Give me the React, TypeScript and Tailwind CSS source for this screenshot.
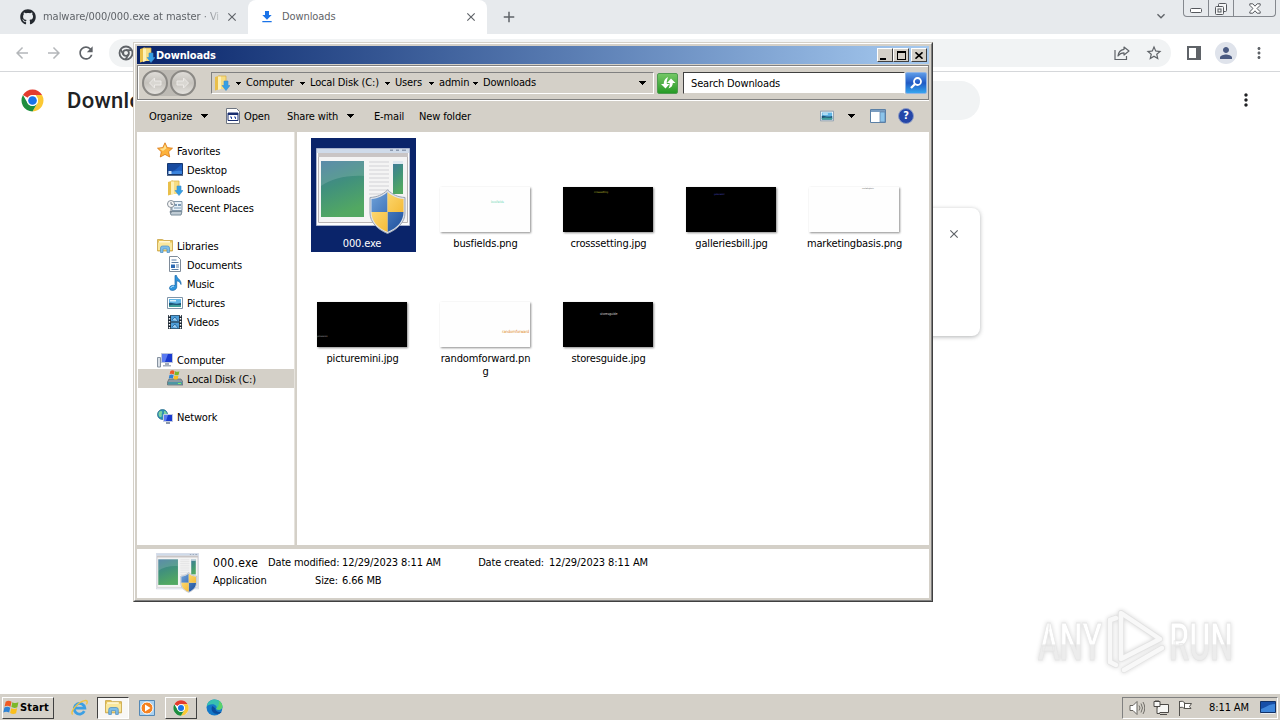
import type { ReactNode } from "react";
import clsx from "clsx";
import { FaGithub } from "react-icons/fa";
import {
  MdAdd,
  MdArrowBack,
  MdArrowForward,
  MdClose,
  MdFileDownload,
  MdKeyboardArrowDown,
  MdMoreVert,
  MdPerson,
  MdRefresh,
  MdStarBorder,
} from "react-icons/md";

type IconProps = { className?: string };

const tahoma = "font-['DejaVu_Sans_Condensed','DejaVu_Sans',sans-serif] [font-stretch:condensed]";

function Caret({ className }: IconProps) {
  return (
    <svg viewBox="0 0 8 4" className={clsx("shrink-0", className)} shapeRendering="crispEdges">
      <path d="M0 0h8L4 4z" />
    </svg>
  );
}

function ChromeLogo({ className }: IconProps) {
  return (
    <svg viewBox="0 0 48 48" className={className}>
      <circle cx="24" cy="24" r="23" fill="#fff" />
      <path d="M4.1 12.5A23 23 0 0 1 43.9 12.5H24a11.5 11.5 0 0 0-10 5.8z" fill="#e33b2e" />
      <path d="M43.9 12.5A23 23 0 0 1 24 47l10-17.3a11.5 11.5 0 0 0 0-11.4L30.5 12.5z" fill="#fcc934" />
      <path d="M4.1 12.5A23 23 0 0 0 24 47l10-17.3a11.5 11.5 0 0 1-20 0z" fill="#1e8e3e" />
      <circle cx="24" cy="24" r="11.5" fill="#fff" />
      <circle cx="24" cy="24" r="9" fill="#1a73e8" />
    </svg>
  );
}

function ChromeMono({ className }: IconProps) {
  return (
    <svg viewBox="0 0 16 16" className={className} fill="none" stroke="#5f6368" strokeWidth="1.8">
      <circle cx="8" cy="8" r="6.5" />
      <circle cx="8" cy="8" r="2.9" />
      <path d="M8 5.1h6M5.5 9.5l-3-5M10.5 9.5l-3 5" />
    </svg>
  );
}

function FolderDownIcon({ className }: IconProps) {
  return (
    <svg viewBox="0 0 16 16" className={className}>
      <path d="M1 2l5-1.5V14l-5 1.5z" fill="#e9bf4a" />
      <path d="M4 1h8v13H4z" fill="#f7dd83" />
      <path d="M4 1h3v13l-3 1z" fill="#fdf0b8" />
      <path d="M4 1h8v13" fill="none" stroke="#d8ac3c" strokeWidth=".7" />
      <path d="M10 6h4v4.5h2L12 15.5 8 10.5h2z" fill="#35a0e6" stroke="#3f8fca" strokeWidth=".6" />
    </svg>
  );
}

function StarIcon() {
  return (
    <svg viewBox="0 0 16 16" className="mb-[2px] size-4">
      <path d="M8 .8l2.2 4.8 5.3.6-3.9 3.5 1.1 5.3L8 12.4 3.3 15l1-5.3L.5 6.2l5.3-.6z" fill="#fdb23c" stroke="#d97612" strokeWidth=".8" />
      <path d="M8 2.5l1.5 3.8L6 9 2.5 6.7l3.9-.4z" fill="#ffe08a" />
    </svg>
  );
}

function DesktopIcon() {
  return (
    <svg viewBox="0 0 16 16" className="size-4">
      <path d="M.5 1.5h15v11H.5z" fill="#1f5fc0" stroke="#17386f" />
      <path d="M1 2h14L8 8 1 11z" fill="#174a9f" />
      <path d="M1 12c5-3 9-4 14-3v3z" fill="#3a83dc" />
      <path d="M1.5 9h3v3h-3z" fill="#cfe5fb" />
      <path d="M0 13h16v1H0z" fill="#5b6f8c" />
    </svg>
  );
}

function RecentIcon() {
  return (
    <svg viewBox="0 0 16 16" className="size-4">
      <path d="M5 1.5h10v9H5z" fill="#e8f1f8" stroke="#8499ab" />
      <path d="M7 4h3v2H7zM11 4h3v2h-3zM7 7.5h7v1H7z" fill="#7b99b4" />
      <path d="M3 11.5h12l-1 3.5H4z" fill="#bfcbd4" stroke="#798c9a" />
      <circle cx="4" cy="4" r="3.5" fill="#f7f7f7" stroke="#858f98" />
      <path d="M4 2v2.3h2M4 8v5" stroke="#6e7b86" fill="none" />
    </svg>
  );
}

function LibrariesIcon({ className = "size-4" }: IconProps) {
  return (
    <svg viewBox="0 0 16 16" className={className}>
      <path d="M.5 1.5h5l1.5 1h8.500V13H.5z" fill="#eac65b" stroke="#c9a548" strokeWidth=".8" />
      <path d="M2 3h11v2H2z" fill="#fff8d8" />
      <path d="M1 4.500h14V12H1z" fill="#f9e79d" />
      <path d="M3.500 14.500V10q0-2 2-2h5q2 0 2 2v4.500H10V11H6v3.500z" fill="#7dbde8" stroke="#4a8cc2" strokeWidth=".7" />
    </svg>
  );
}

function DocumentsIcon() {
  return (
    <svg viewBox="0 0 16 16" className="mb-px size-4">
      <path d="M2.500.5h8l3 3v12h-11z" fill="#fff" stroke="#7e8b99" />
      <path d="M4.500 4h5M4.500 6.500h7M9 9h3M9 11h3M4.500 13.500h7" stroke="#5c7ea5" />
      <path d="M4 8.500h4V12H4z" fill="#2d6ab4" />
    </svg>
  );
}

function MusicIcon() {
  return (
    <svg viewBox="0 0 16 16" className="mb-px size-4">
      <path d="M8 .5h1.500c.5 3.500 5 4 4.500 9-.6-2.300-2-3.300-4.300-3.700V12c0 4-7.200 4.600-7.200 1.200C2.500 10.500 6 9.800 8 10.600z" fill="#2d94dd" stroke="#1766a8" strokeWidth=".7" />
      <path d="M3.800 13c.5-1.500 2-2 3.300-1.800" stroke="#b9e3ff" fill="none" />
    </svg>
  );
}

function PicturesIcon({ className = "size-4" }: IconProps) {
  return (
    <svg viewBox="0 0 16 16" className={className}>
      <path d="M.5 2.500h15v11H.5z" fill="#fff" stroke="#8095a8" />
      <path d="M2 4h12v8H2z" fill="#5fb4e4" />
      <path d="M2 8c4-1 5 2 12 0v4H2z" fill="#1d5478" />
      <path d="M2 10.500c4-1.500 8 0 12-.5v2H2z" fill="#3f9f9a" />
      <path d="M3 5h6v1.500H3z" fill="#d8f1fc" />
    </svg>
  );
}

function VideosIcon() {
  return (
    <svg viewBox="0 0 16 16" className="size-4">
      <path d="M1 1h14v14H1z" fill="#1c2733" />
      <path d="M4 1.500h8v6H4zM4 8.500h8v6H4z" fill="#4d9ed8" />
      <path d="M5 6l3-3 3 4M5 13l3-3 3 4" stroke="#1f5f97" fill="#9ccdf0" strokeWidth=".8" />
      <path d="M2.500 1v14M13.500 1v14" stroke="#fff" strokeWidth="1.4" strokeDasharray="1.5 1.5" />
    </svg>
  );
}

function ComputerIcon() {
  return (
    <svg viewBox="0 0 16 16" className="size-4">
      <path d="M.5 5.500h3V15h-3z" fill="#d9dfe6" stroke="#8793a1" />
      <path d="M4.500 1.500h11v9h-11z" fill="#1a3bd0" stroke="#bcc6dc" />
      <path d="M5 2h6l-3 8H5z" fill="#5a7af0" />
      <path d="M8 11h4v2h2v1.500H6V13h2z" fill="#a4aebd" />
    </svg>
  );
}

function FlagPanes() {
  return (
    <>
      <path d="M2.500 2.500C4.500 1.300 6.300 1.600 8 2.600L7 7.300C5.300 6.300 3.500 6 1.500 7.100z" fill="#ef5a24" />
      <path d="M8.800 3c1.900 1 3.700 1.100 5.700.1l-1 4.600c-2 1-3.800.8-5.600-.1z" fill="#7cb829" />
      <path d="M1.300 8.100c2-1 3.800-.9 5.500.1l-1 4.600c-1.700-1-3.500-1.200-5.500-.1z" fill="#2f83d4" />
      <path d="M7.700 8.600c1.800.9 3.600 1.100 5.600.1l-1 4.700c-2 1-3.800.8-5.600-.2z" fill="#fbbf1c" />
    </>
  );
}

function DiskIcon() {
  return (
    <svg viewBox="0 0 16 16" className="mb-px size-4">
      <path d="M2 9h12l2 3v3H.5v-3z" fill="#8d9aa3" stroke="#55646d" strokeWidth=".7" />
      <path d="M1 12h14v2.500H1z" fill="#4c97a3" />
      <path d="M11 13h3v1h-3z" fill="#7ff06a" />
      <g transform="translate(1.5 -1) scale(.75)">
        <FlagPanes />
      </g>
    </svg>
  );
}

function NetworkIcon() {
  return (
    <svg viewBox="0 0 16 16" className="size-4">
      <circle cx="5.5" cy="5.5" r="5" fill="#2d8fb5" stroke="#1e6685" strokeWidth=".7" />
      <path d="M2 3c2-2 4-1 3 1s1 3-1 4-3-3-2-5zM7 2c2 0 3 2 3 4H7z" fill="#7fd3a0" />
      <path d="M6.500 5.500h9v7h-9z" fill="#1a3bd0" stroke="#c3cbe0" />
      <path d="M7 6h4l-2 6H7z" fill="#5a7af0" />
      <path d="M9 13h4v2H9z" fill="#8b98ab" />
    </svg>
  );
}

function ExeIcon({ className }: IconProps) {
  return (
    <svg viewBox="0 0 94 88" className={className}>
      <defs>
        <linearGradient id="exePane" x1="0" y1="0" x2=".3" y2="1">
          <stop offset="0" stopColor="#40789c" />
          <stop offset=".5" stopColor="#41917c" />
          <stop offset="1" stopColor="#52a862" />
        </linearGradient>
        <linearGradient id="exeBlue" x1="0" y1="0" x2="1" y2="1">
          <stop offset="0" stopColor="#6fa2da" />
          <stop offset="1" stopColor="#1c4e9c" />
        </linearGradient>
        <linearGradient id="exeGold" x1="0" y1="0" x2="1" y2="1">
          <stop offset="0" stopColor="#ffe48c" />
          <stop offset="1" stopColor="#f2ae1c" />
        </linearGradient>
      </defs>
      <path d="M.5.5h93v77H.5z" fill="#fdfdfd" stroke="#a9b3cc" />
      <path d="M1 1h92v4H1z" fill="#cfdbea" />
      <path d="M74 1.500h3v1.500h-3zM80 1.500h3v1.500h-3zM86 1.500h4v1.500h-4z" fill="#8d9bb0" />
      <path d="M2.500 6.500h89v68h-89z" fill="#f4f4f4" stroke="#b9b4b4" />
      <path d="M2 5h90v4H2z" fill="#c9c5c5" />
      <path d="M5 13h43v56H5z" fill="url(#exePane)" />
      <path d="M5 13h43v15C30 27 15 31 5 38z" fill="#fff" opacity=".14" />
      <path d="M53 14h20M53 18h20M53 22h20M53 26h20M53 30h20M53 34h20M53 38h20M53 42h20M53 46h15" stroke="#d2d2d6" />
      <path d="M77 13h10v33H77z" fill="url(#exePane)" />
      <path d="M77 13h10v3H77z" fill="#dfe8f0" />
      <path d="M71.500 42c6 5 10 7 17.500 7.500V65c0 9-7 16-17.500 20.500C61 81 54 74 54 65V49.500C61.500 49 66 47 71.500 42z" fill="#dfe4ec" stroke="#9ba5b3" />
      <path d="M71.500 44v20H55.500V51c7-.5 11.500-3 16-7zM71.500 64h16c0 9-6 16-16 20z" fill="url(#exeBlue)" />
      <path d="M71.500 44v20h16V51c-7-.5-11.500-3-16-7zM71.500 64h-16c0 9 6 16 16 20z" fill="url(#exeGold)" />
    </svg>
  );
}

const sidebar: { label: string; icon?: ReactNode; child?: boolean; selected?: boolean }[] = [
  { label: "Favorites", icon: <StarIcon /> },
  { label: "Desktop", icon: <DesktopIcon />, child: true },
  { label: "Downloads", icon: <FolderDownIcon className="mb-px size-4" />, child: true },
  { label: "Recent Places", icon: <RecentIcon />, child: true },
  { label: "" },
  { label: "Libraries", icon: <LibrariesIcon /> },
  { label: "Documents", icon: <DocumentsIcon />, child: true },
  { label: "Music", icon: <MusicIcon />, child: true },
  { label: "Pictures", icon: <PicturesIcon />, child: true },
  { label: "Videos", icon: <VideosIcon />, child: true },
  { label: "" },
  { label: "Computer", icon: <ComputerIcon /> },
  { label: "Local Disk (C:)", icon: <DiskIcon />, child: true, selected: true },
  { label: "" },
  { label: "Network", icon: <NetworkIcon /> },
];

const crumbs = [
  { label: "Computer", width: "w-[54px]" },
  { label: "Local Disk (C:)", width: "w-[75px]" },
  { label: "Users", width: "w-[34px]" },
  { label: "admin", width: "w-[34px]" },
  { label: "Downloads", width: "w-[60px]" },
];

const files = [
  { name: "busfields.png", thumb: "bg-[#fefefe]", word: "busfields", mark: "left-[51px] top-[13px] text-[3.5px] text-[#7fdcc0]" },
  { name: "crosssetting.jpg", thumb: "bg-black", word: "crosssetting", mark: "left-[31px] top-[4px] text-[2.9px] text-[#a0a02a]" },
  { name: "galleriesbill.jpg", thumb: "bg-black", word: "galleriesbill", mark: "left-[28px] top-[7px] text-[2.4px] text-[#4040b0]" },
  { name: "marketingbasis.png", thumb: "bg-[#fefefe]", word: "marketingbasis", mark: "left-[53px] top-0 text-[2px] text-[#707070]" },
  { name: "picturemini.jpg", thumb: "bg-black", word: "picturemini", mark: "left-0 top-[34px] text-[2.4px] text-[#a0a0a0]" },
  { name: "randomforward.pn\ng", thumb: "bg-[#fefefe]", word: "randomforward", mark: "left-[62px] top-[27px] text-[4.2px] text-[#e08a2a]" },
  { name: "storesguide.jpg", thumb: "bg-black", word: "storesguide", mark: "left-[37px] top-[10px] text-[3.6px] text-[#c0c0c0]" },
];

function BrowserTabs() {
  return (
    <div className={clsx("flex h-[34px] bg-[#e7eaed] text-[11px] text-[#5f6368]", tahoma)}>
      <div className="flex w-[248px] items-center pl-5">
        <FaGithub className="size-4 text-[#24292f]" />
        <span className="mt-px ml-[7px] w-[176px] overflow-hidden whitespace-nowrap tracking-[-0.04px] [mask-image:linear-gradient(to_right,black_90%,#0004)]">
          malware/000/000.exe at master · Vi
        </span>
        <MdClose className="ml-[6px] size-[14px]" />
      </div>
      <div className="flex w-[239px] items-center rounded-t-lg bg-white pl-[11px]">
        <MdFileDownload className="size-4 text-[#1a73e8]" />
        <span className="mt-px ml-[7px] w-[181px] tracking-[-0.1px]">Downloads</span>
        <MdClose className="ml-px size-[14px]" />
      </div>
      <MdAdd className="mt-2 ml-[13px] size-[18px]" />
      <MdKeyboardArrowDown className="mt-2 ml-auto size-4" />
      <div className="mr-1 ml-[14px] flex h-[17px] w-[93px] rounded-b-[4px] border border-t-0 border-[#84888e] text-[#55585d]">
        <div className="flex w-[25px] items-center justify-center border-r border-[#84888e]">
          <svg viewBox="0 0 12 5" className="mt-1 h-[5px] w-3">
            <rect x=".5" y=".5" width="11" height="4" rx="1" fill="#fff" stroke="currentColor" />
          </svg>
        </div>
        <div className="flex w-[25px] items-center justify-center border-r border-[#84888e]">
          <svg viewBox="0 0 14 14" className="mt-[2px] size-[14px]" fill="#f5f6f7" stroke="currentColor">
            <rect x="4.5" y="1.5" width="8" height="8" rx="1" />
            <rect x="1.5" y="4.5" width="8" height="8" rx="1" />
            <rect x="4" y="7" width="3" height="3" />
          </svg>
        </div>
        <div className="flex flex-1 items-center justify-center">
          <svg viewBox="0 0 12 11" className="h-[11px] w-3">
            <path d="M.8.8h3L6 3.2 8.200.8h3v1.500L8 5.500l3.200 3.200v1.500h-3L6 7.800l-2.200 2.400h-3V8.700L4 5.500.8 2.300z" fill="#fff" stroke="currentColor" />
          </svg>
        </div>
      </div>
    </div>
  );
}

function BrowserToolbar() {
  return (
    <div className="flex h-[38px] items-center border-b border-[#d5d7da] bg-white text-[#5f6368]">
      <MdArrowBack className="ml-[13px] size-[18px] text-[#b4b7ba]" />
      <MdArrowForward className="ml-[14px] size-[18px] text-[#b4b7ba]" />
      <MdRefresh className="ml-[13px] size-5" />
      <div className="ml-[13px] flex h-7 w-[1062px] items-center rounded-full bg-[#f1f3f4] pl-[9px]">
        <ChromeMono className="size-4" />
        <svg viewBox="0 0 16 16" className="ml-auto size-4" fill="none" stroke="currentColor" strokeWidth="1.2">
          <path d="M1 5v9.500h11.500V11" />
          <path d="M10 2l5 4-5 4V7.800C7.500 7.800 5.500 8.800 4 11c.3-3.500 2.500-6.200 6-6.700z" strokeLinejoin="round" />
        </svg>
        <MdStarBorder className="mr-[8px] ml-[15px] size-[18px]" />
      </div>
      <svg viewBox="0 0 14 14" className="ml-4 h-[14px] w-[14px]">
        <path d="M1 1h12v12H1z" fill="none" stroke="currentColor" strokeWidth="2" />
        <path d="M9 1h4v12H9z" fill="currentColor" />
      </svg>
      <div className="ml-[14px] flex size-[22px] items-center justify-center rounded-full bg-[#dfe3eb]">
        <MdPerson className="size-[18px] text-[#4a5a82]" />
      </div>
      <MdMoreVert className="ml-[13px] size-[18px]" />
    </div>
  );
}

function Watermark() {
  return (
    <svg viewBox="0 0 230 90" className="absolute top-[603px] left-[1030px] h-[90px] w-[230px] drop-shadow-[0_0_2px_rgba(0,0,0,0.16)]">
      <defs>
        <linearGradient id="wm" x1="0" y1="0" x2="0" y2="1">
          <stop offset=".52" stopColor="#fff" />
          <stop offset=".54" stopColor="#ececec" />
        </linearGradient>
      </defs>
      <g fill="url(#wm)" stroke="#e6e6e6" strokeWidth=".8" fontFamily="Roboto" fontSize="52" fontWeight="500">
        <text x="8" y="57" textLength="64" lengthAdjust="spacingAndGlyphs">ANY</text>
        <text x="139" y="57" textLength="64" lengthAdjust="spacingAndGlyphs">RUN</text>
      </g>
      <g fill="none" strokeLinejoin="round" strokeLinecap="round">
        <path d="M80 59V17l6-2M91 10v46l39-20zM80 59l6 3M94 67l38-22" stroke="#e2e2e2" strokeWidth="6" />
        <path d="M80 59V17l6-2M91 10v46l39-20zM80 59l6 3M94 67l38-22" stroke="#f8f8f8" strokeWidth="4.5" />
      </g>
    </svg>
  );
}

function BrowserPage() {
  return (
    <div className="relative h-[621px] bg-white">
      <div className="flex h-14 items-center pl-[21px]">
        <ChromeLogo className="size-[23px]" />
        <h1 className="ml-[23px] w-[300px] font-['Roboto',sans-serif] text-[22px] font-medium tracking-[0.3px] text-[#202124]">Downloads</h1>
        <div className="h-[39px] w-[613px] rounded-full bg-[#f1f3f4]" />
        <MdMoreVert className="ml-[256px] size-5 text-[#202124]" />
      </div>
      <div className="mt-20 ml-[300px] flex h-[128px] w-[680px] justify-end rounded-lg pt-[19px] pr-[19px] shadow-[0_1px_4px_rgba(60,64,67,0.4)]">
        <MdClose className="size-[14px] text-[#5f6368]" />
      </div>
    </div>
  );
}

const captionButton =
  "flex h-[14px] w-4 items-center justify-center border border-t-white border-l-white border-r-[#404040] border-b-[#404040] bg-[#d4d0c8]";

function TitleBar() {
  return (
    <div className="flex h-[18px] items-center bg-linear-to-r from-[#0a246a] to-[#a6caf0] pr-[2px] pl-[2px]">
      <FolderDownIcon className="size-4" />
      <span className="mt-[2px] ml-px text-[11px] font-bold text-white">Downloads</span>
      <div className="ml-auto flex">
        <div className={captionButton}>
          <div className="mt-[7px] mr-1 h-[2px] w-[6px] bg-black" />
        </div>
        <div className={captionButton}>
          <div className="h-[9px] w-[9px] border border-t-2 border-black" />
        </div>
        <div className={clsx(captionButton, "ml-[2px]")}>
          <svg viewBox="0 0 8 7" className="h-[7px] w-2" stroke="#000" strokeWidth="1.6">
            <path d="M.5.3l7 6.400M7.500.3l-7 6.400" />
          </svg>
        </div>
      </div>
    </div>
  );
}

function NavCircle({ flip }: { flip?: boolean }) {
  return (
    <div className="flex size-[26px] items-center justify-center rounded-full border-2 border-[#8b8985] bg-linear-to-b from-[#dedcd8] via-[#c5c2bc] to-[#e4e2de]">
      <svg viewBox="0 0 14 12" className={clsx("h-3 w-[14px]", flip && "-scale-x-100")}>
        <path d="M6.500 1L1.500 6l5 5V8H13V4H6.500z" fill="#d9d7d2" stroke="#eceae7" />
      </svg>
    </div>
  );
}

function AddressBar() {
  return (
    <div className="mt-px flex h-[35px] items-center border border-[#808080] pt-px shadow-[inset_1px_1px_0_#fff,0_1px_0_#fff]">
      <div className="ml-1 flex gap-[2px] rounded-full bg-[#bdbab4]">
        <NavCircle />
        <NavCircle flip />
      </div>
      <div className="ml-[15px] flex h-[22px] w-[443px] items-center border border-t-[#808080] border-r-white border-b-white border-l-[#808080]">
        <FolderDownIcon className="ml-[2px] size-4" />
        <Caret className="ml-[6px] h-[3px] w-[5px]" />
        <div className="flex">
          {crumbs.map((crumb, i) => (
            <div key={crumb.label} className="flex items-center">
              {i > 0 && <Caret className="h-[3px] w-[5px]" />}
              <span className={clsx("ml-[5px] whitespace-nowrap", crumb.width)}>{crumb.label}</span>
            </div>
          ))}
        </div>
        <Caret className="mr-[7px] ml-auto h-1 w-[7px]" />
      </div>
      <div className="ml-[3px] flex size-[21px] items-center justify-center rounded-[2px] border border-[#4f9a50] bg-linear-to-b from-[#73c764] to-[#239a25]">
        <svg viewBox="0 0 16 14" className="h-[14px] w-4" fill="#fff">
          <path d="M5.500 13L1 8.500h2.700q0-5 4.300-7-1.500 3.500-1.200 7H9.500zM11 3l4.500 4.500h-2.700q0 4-4.300 5.500 1.500-2.500 1.200-5.500H7z" transform="translate(0 -.5)" />
        </svg>
      </div>
      <div className="ml-[5px] flex h-[22px] w-[222px] items-center border border-t-[#404040] border-r-white border-b-[#d4d0c8] border-l-[#404040] bg-white pt-[2px] pl-[7px]">
        Search Downloads
      </div>
      <div className="flex size-[22px] items-center justify-center rounded-[2px] border border-[#8fb4e6] bg-linear-to-b from-[#5e9be8] via-[#2159c4] to-[#37a5ee]">
        <svg viewBox="0 0 14 14" className="size-[14px]" fill="none" stroke="#fff" strokeWidth="1.8">
          <circle cx="8.5" cy="5.5" r="3.5" />
          <path d="M6 8l-4 4" strokeWidth="2.3" />
        </svg>
      </div>
    </div>
  );
}

function CommandBar() {
  return (
    <div className="flex h-8 items-center pl-3">
      <span className="mt-[2px] w-[52px]">Organize</span>
      <Caret className="h-1 w-[7px]" />
      <svg viewBox="0 0 16 16" className="ml-[17px] size-4">
        <path d="M1.500.5h10l3 3v12h-13z" fill="#fff" stroke="#6d7480" />
        <path d="M3 5h10v7.500H3z" fill="#fff" stroke="#1a2e70" />
        <path d="M3 5h10v2H3z" fill="#1a2e70" />
        <path d="M5 9h1.500v2M9 9h1.500v2" fill="none" stroke="#2d4da6" />
      </svg>
      <span className="mt-[2px] ml-[3px] w-[43px]">Open</span>
      <span className="mt-[2px] w-[60px] whitespace-nowrap">Share with</span>
      <Caret className="h-1 w-[7px]" />
      <span className="mt-[2px] ml-5 w-[45px]">E-mail</span>
      <span className="mt-[2px]">New folder</span>
      <PicturesIcon className="ml-auto size-[14px]" />
      <Caret className="ml-[14px] h-1 w-[7px]" />
      <svg viewBox="0 0 16 14" className="ml-[15px] h-[14px] w-4">
        <path d="M.5.5h15v13H.5z" fill="#fff" stroke="#5b80a6" />
        <path d="M1 1h14v2H1z" fill="#7b9dc0" />
        <path d="M10 3h5v10h-5z" fill="#8cc4ea" stroke="#5b80a6" strokeWidth=".7" />
      </svg>
      <div className="mr-[15px] ml-3 flex size-4 items-center justify-center rounded-full border border-[#8b9bc4] bg-[#2546a8] text-[11px] font-bold text-white">?</div>
    </div>
  );
}

function Sidebar() {
  return (
    <div className="w-[158px] border-r border-[#e6e3dd] bg-white pt-[9px]">
      {sidebar.map((item, i) => (
        <div
          key={i}
          className={clsx("ml-px flex h-[19px] items-center gap-1 pl-[19px]", item.child && "pl-[29px]", item.selected && "bg-[#d4d0c8]")}
        >
          {item.icon}
          <span className="mt-[3px] whitespace-nowrap">{item.label}</span>
        </div>
      ))}
    </div>
  );
}

function FileGrid() {
  return (
    <div className="ml-[2px] grid flex-1 auto-rows-[115px] grid-cols-[repeat(5,123px)] content-start bg-white pt-[6px] pl-[3px] text-center leading-[13px]">
      <div className="ml-[11px] h-[114px] w-[105px] bg-[#0a246a] text-white">
        <ExeIcon className="mt-[10px] ml-[5px] h-[88px] w-[94px]" />
        <div className="mt-px pr-[3px]">000.exe</div>
      </div>
      {files.map((file) => (
        <div key={file.name} className="pt-[49px]">
          <div className={clsx("relative mb-[5px] ml-[17px] h-[45px] w-[90px] shadow-[1px_1px_2px_rgba(0,0,0,0.45)]", file.thumb)}>
            <div className={clsx("absolute leading-[1.2]", file.mark)}>{file.word}</div>
          </div>
          <div className="pl-[2px] whitespace-pre-line">{file.name}</div>
        </div>
      ))}
    </div>
  );
}

function DetailsPane() {
  return (
    <div className="flex h-[49px] bg-white pl-[19px]">
      <ExeIcon className="mt-1 h-[41px] w-[43px]" />
      <div className="ml-[14px] grid grid-cols-[55px_70px_135px_71px_auto] grid-rows-[18px_18px] content-start items-center pt-[5px] whitespace-nowrap">
        <span className="text-[12px] tracking-[0.3px]">000.exe</span>
        <span className="text-right">Date modified:</span>
        <span className="pl-1 tracking-[-0.1px]">12/29/2023 8:11 AM</span>
        <span className="text-right">Date created:</span>
        <span className="pl-[5px] tracking-[-0.1px]">12/29/2023 8:11 AM</span>
        <span>Application</span>
        <span className="text-right">Size:</span>
        <span className="pl-1">6.66 MB</span>
      </div>
    </div>
  );
}

function ExplorerWindow() {
  return (
    <div
      className={clsx(
        "absolute top-[42px] left-[133px] flex h-[560px] w-[800px] flex-col border border-t-[#d4d0c8] border-r-[#404040] border-b-[#404040] border-l-[#d4d0c8] bg-[#d4d0c8] text-[11px] tracking-[-0.15px] text-black",
        tahoma,
      )}
    >
      <div className="flex flex-1 flex-col border border-t-white border-r-[#808080] border-b-[#808080] border-l-white p-[2px]">
        <TitleBar />
        <AddressBar />
        <CommandBar />
        <div className="flex h-[413px]">
          <Sidebar />
          <FileGrid />
        </div>
        <div className="mt-1">
          <DetailsPane />
        </div>
      </div>
    </div>
  );
}

const raised = "border border-t-white border-l-white border-r-[#404040] border-b-[#404040]";

function Taskbar() {
  return (
    <div
      className={clsx(
        "relative flex h-[27px] items-center bg-[#d4d0c8] pt-[2px] pl-[2px] text-[11px] tracking-[-0.1px] text-black shadow-[inset_0_1px_0_#fff]",
        tahoma,
      )}
    >
      <div className={clsx("flex h-[22px] w-[52px] items-center", raised)}>
        <svg viewBox="0 0 16 16" className="size-[17px]">
          <FlagPanes />
        </svg>
        <span className="mt-px font-bold tracking-[0.15px]">Start</span>
      </div>
      <svg viewBox="0 0 16 16" className="ml-[17px] size-[17px]" fill="none">
        <path d="M12.500 11.500A5 5 0 1 1 13 8.500H4" stroke="#3c9fe3" strokeWidth="2.6" />
        <path d="M1.500 14.500C-1 12 6 3 13 1.500c3-.5 2.500 2 1.500 3.500" stroke="#f0c340" strokeWidth="1.3" />
      </svg>
      <div className="ml-[9px] flex h-[22px] w-8 items-center justify-center border border-t-[#404040] border-r-white border-b-white border-l-[#404040] bg-[#f8f7f5]">
        <LibrariesIcon className="size-[17px]" />
      </div>
      <svg viewBox="0 0 16 16" className="ml-[10px] size-4">
        <path d="M.5.5h15v15H.5z" fill="#a9d1f0" stroke="#5488b5" />
        <circle cx="8" cy="8" r="6" fill="#f58220" stroke="#fff" />
        <path d="M6 4.500l5.500 3.500L6 11.500z" fill="#fff" />
      </svg>
      <div className={clsx("ml-[10px] flex h-[22px] w-8 items-center justify-center", raised)}>
        <ChromeLogo className="size-4" />
      </div>
      <svg viewBox="0 0 16 16" className="ml-[9px] size-[17px]">
        <circle cx="8" cy="8" r="7.5" fill="#1478c8" />
        <path d="M.6 7C1.500 2.500 4.500.5 8 .5c5 0 7.500 3.500 7.500 6.500 0 3-4 4-6 2.500 1.500-2-.5-4.500-3.500-4.500C3.500 5 1.500 6 .6 7z" fill="#38c0b0" />
        <path d="M12 1.700c2.500 1.500 3.500 3.500 3.500 5.300 0 3-4 4-6 2.500C11 8 13 5 12 1.700z" fill="#5bd26a" />
        <path d="M6 6.500c-2 3 0 7.500 5 7.500 1.500 0 3-.8 4-2-3 1-6.500-.5-6-3z" fill="#0b4c9c" />
      </svg>
      <div className="mr-[2px] ml-auto flex h-[22px] w-[156px] items-center border border-t-[#808080] border-r-white border-b-white border-l-[#808080]">
        <svg viewBox="0 0 16 16" className="ml-[6px] size-4" fill="#fff" stroke="#67645f">
          <path d="M1 5.500h3l4-4v13l-4-4H1z" />
          <path d="M10 5.500q2 2.500 0 5M12 3.500q3 4.500 0 9M14 2q3.500 6 0 12" fill="none" strokeWidth=".9" />
        </svg>
        <svg viewBox="0 0 16 16" className="ml-[8px] size-4" fill="#f7f7f5" stroke="#4c4a47">
          <path d="M4.500 4.500h11v8h-11zM7 14.500h7" />
          <path d="M1 1.500h6v5H1zM3 0v2M5 0v2M4 6.500v7h3" />
        </svg>
        <svg viewBox="0 0 16 16" className="ml-[8px] size-4" fill="#fff" stroke="#55534f">
          <path d="M2.500 1v15M2.500 1.500q3-1 5 1v6q-2-2-5-1zM7.500 3.500h7l-2 3 1.500 2h-6.500z" />
        </svg>
        <span className="mt-px ml-4 w-[51px] whitespace-nowrap">8:11 AM</span>
        <svg viewBox="0 0 16 14" className="h-[14px] w-4">
          <path d="M.5.5h15v11H.5z" fill="#174fa8" stroke="#123267" />
          <path d="M1 8c4-1 8-5 14-5v8H1z" fill="#3f86da" />
          <path d="M1 12h14v1H1z" fill="#e8edf3" />
        </svg>
      </div>
    </div>
  );
}

export default function App() {
  return (
    <div className="relative h-[720px] w-[1280px] overflow-hidden bg-white">
      <BrowserTabs />
      <BrowserToolbar />
      <BrowserPage />
      <ExplorerWindow />
      <Watermark />
      <Taskbar />
    </div>
  );
}
